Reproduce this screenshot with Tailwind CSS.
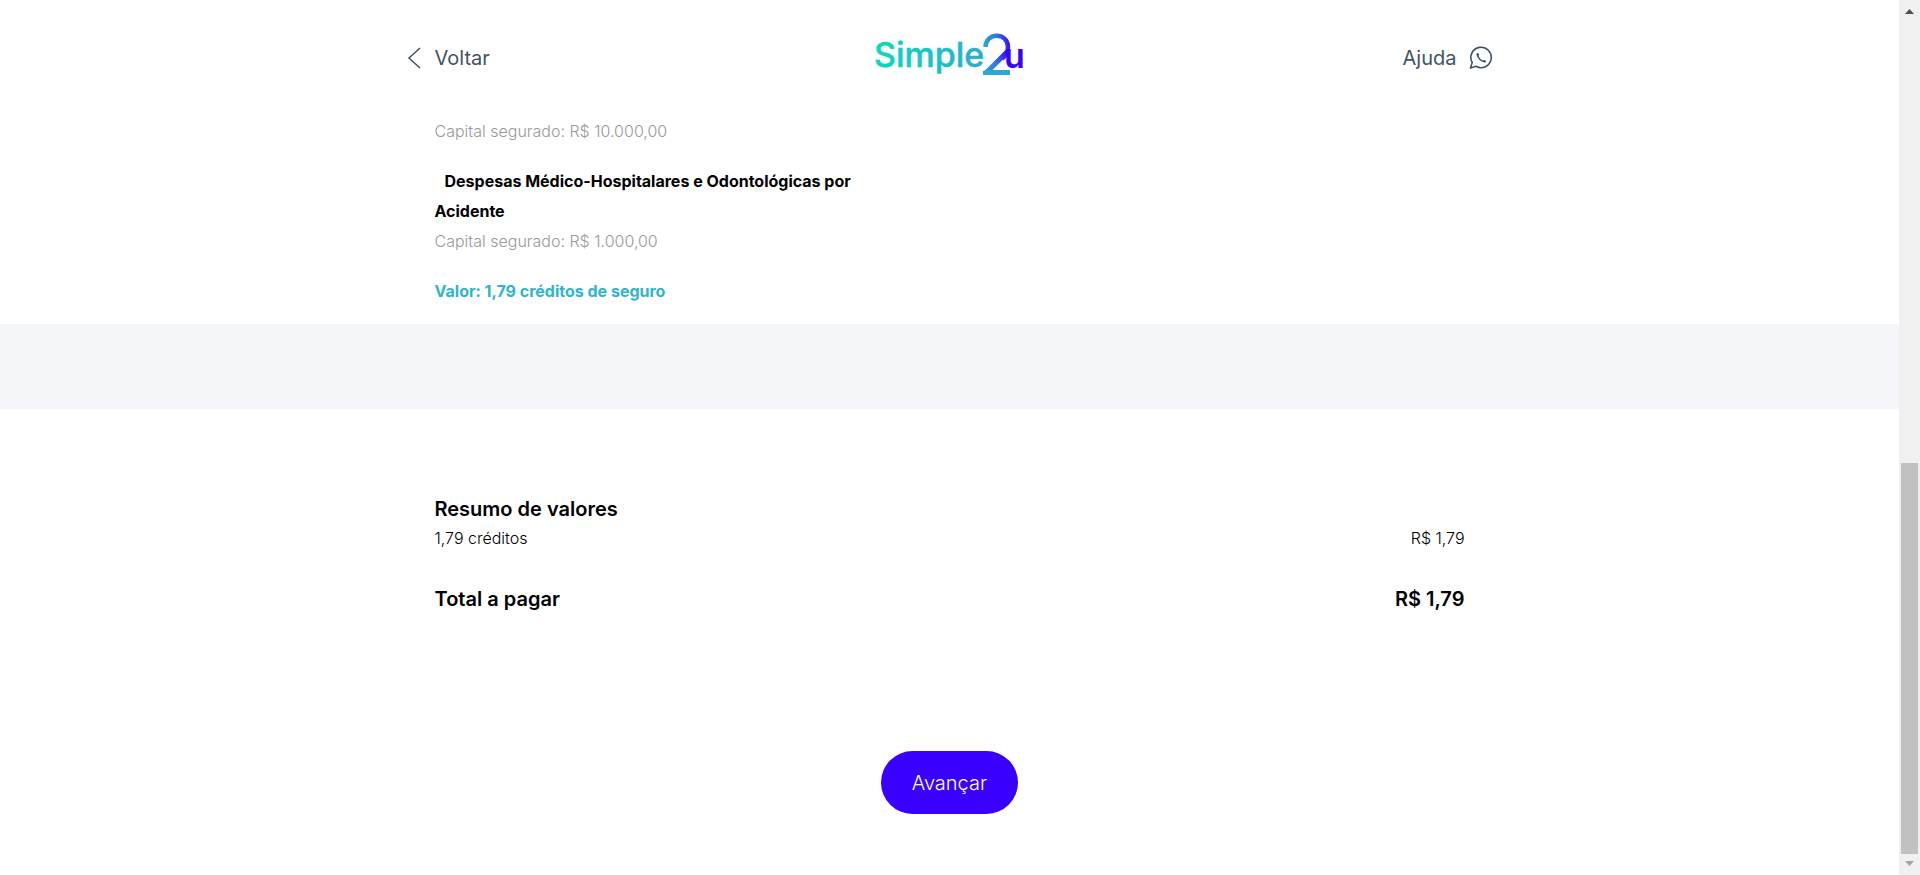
<!DOCTYPE html>
<html lang="pt-BR">
<head>
<meta charset="utf-8">
<meta name="viewport" content="width=device-width, initial-scale=1">
<title>Simple2u</title>
<script src="https://cdn.jsdelivr.net/npm/@tailwindcss/browser@4"></script>
</head>
<body class="flex min-h-screen bg-white font-['Inter','Open_Sans',sans-serif] text-black">
<div class="flex min-w-0 flex-1 flex-col">
  <header class="mx-auto grid w-full max-w-[1086px] grid-cols-3 items-center pt-[33px] text-xl text-[#3f5368]">
    <a href="#" class="flex items-center gap-[14px] justify-self-start pt-1">
      <svg class="h-[22px] w-[14px]" viewBox="0 0 14 22" fill="none" stroke="currentColor" stroke-width="1.5"><path d="M13 1 2 11l11 10"/></svg>
      Voltar
    </a>
    <a href="#" class="justify-self-center" aria-label="Simple2u">
      <svg class="h-[46px] w-[152px]" viewBox="0 0 152 46" font-family="Inter, sans-serif">
        <defs>
          <linearGradient id="word" gradientUnits="userSpaceOnUse" x1="0" y1="0" x2="110" y2="0"><stop stop-color="#06dbb9"/><stop offset="1" stop-color="#28acd2"/></linearGradient>
          <linearGradient id="two" gradientUnits="userSpaceOnUse" x1="110" y1="20" x2="137" y2="20"><stop stop-color="#2da8d4"/><stop offset=".5" stop-color="#2d74dc"/><stop offset="1" stop-color="#3a05fc"/></linearGradient>
          <linearGradient id="stem" gradientUnits="userSpaceOnUse" x1="112" y1="41" x2="134" y2="20"><stop stop-color="#2b9fd5"/><stop offset=".5" stop-color="#2d7bdd"/><stop offset="1" stop-color="#3900ff"/></linearGradient>
        </defs>
        <text x="0" y="34" font-size="34" font-weight="500" fill="url(#word)" stroke="url(#word)" stroke-width="0.5">Simple</text>
        <path d="M111.500 14C111.500 -1 134 -1 134 14C134 20 131 23 128 26" fill="none" stroke="url(#two)" stroke-width="4.500"/>
        <path d="M133 19 113 39" fill="none" stroke="url(#stem)" stroke-width="5"/>
        <path d="M109 42V38L112 37H136V42Z" fill="#2aa8d4"/>
        <text x="130" y="35" font-size="34" font-weight="600" fill="#3900ff">u</text>
      </svg>
    </a>
    <a href="#" class="flex items-center gap-3 justify-self-end pt-1">
      Ajuda
      <svg class="h-6 w-6" viewBox="0 0 24 24" fill="none" stroke="currentColor" stroke-width="1.6" stroke-linejoin="round"><path d="M3.200 16.500A10.200 10.200 0 1 1 7 20.300L1.500 22Z"/><path d="M8.200 7.500C8.500 12 12 15.500 16.500 15.700" stroke-width="1.500"/><path d="M7.500 8.200 9 6.800 10.200 9 9 10.200ZM13.800 15 15 13.800 17.200 15 15.800 16.500Z" fill="currentColor" stroke="none"/></svg>
    </a>
  </header>

  <main class="flex flex-1 flex-col">
    <section class="mx-auto w-full max-w-[1030px] pt-[37px] pb-[18px] leading-[30px]">
      <div class="flex max-w-[440px] flex-col gap-5">
        <p class="font-light text-[#999]">Capital segurado: R$ 10.000,00</p>
        <div>
          <h2 class="indent-[10px] font-bold">Despesas Médico-Hospitalares e Odontológicas por Acidente</h2>
          <p class="font-light text-[#999]">Capital segurado: R$ 1.000,00</p>
        </div>
        <p class="font-bold text-[#2fb4cf]">Valor: 1,79 créditos de seguro</p>
      </div>
    </section>

    <div class="h-[85px] bg-[#f4f6fa]"></div>

    <section class="mx-auto w-full max-w-[1030px] pt-[86px] leading-[30px]">
      <h2 class="text-xl font-semibold">Resumo de valores</h2>
      <dl>
        <div class="flex justify-between font-light"><dt>1,79 créditos</dt><dd>R$ 1,79</dd></div>
        <div class="mt-8 flex justify-between text-xl font-semibold"><dt>Total a pagar</dt><dd>R$ 1,79</dd></div>
      </dl>
    </section>

    <div class="flex justify-center pt-[138px]">
      <button type="button" class="h-[63px] rounded-full bg-[#3900ff] px-[31px] text-xl font-light text-white">Avançar</button>
    </div>
  </main>
</div>

<div class="flex w-[21px] shrink-0 flex-col items-center bg-[#f0f0f0]" aria-hidden="true">
  <svg class="h-[22px] w-[9px]" viewBox="0 0 9 22"><path d="M0 14 4.500 9 9 14Z" fill="#505050"/></svg>
  <div class="flex w-[17px] flex-1 flex-col justify-end"><div class="h-[47%] bg-[#c1c1c1]"></div></div>
  <svg class="h-[21px] w-[9px]" viewBox="0 0 9 21"><path d="M0 7 4.500 12 9 7Z" fill="#a3a3a3"/></svg>
</div>
</body>
</html>
